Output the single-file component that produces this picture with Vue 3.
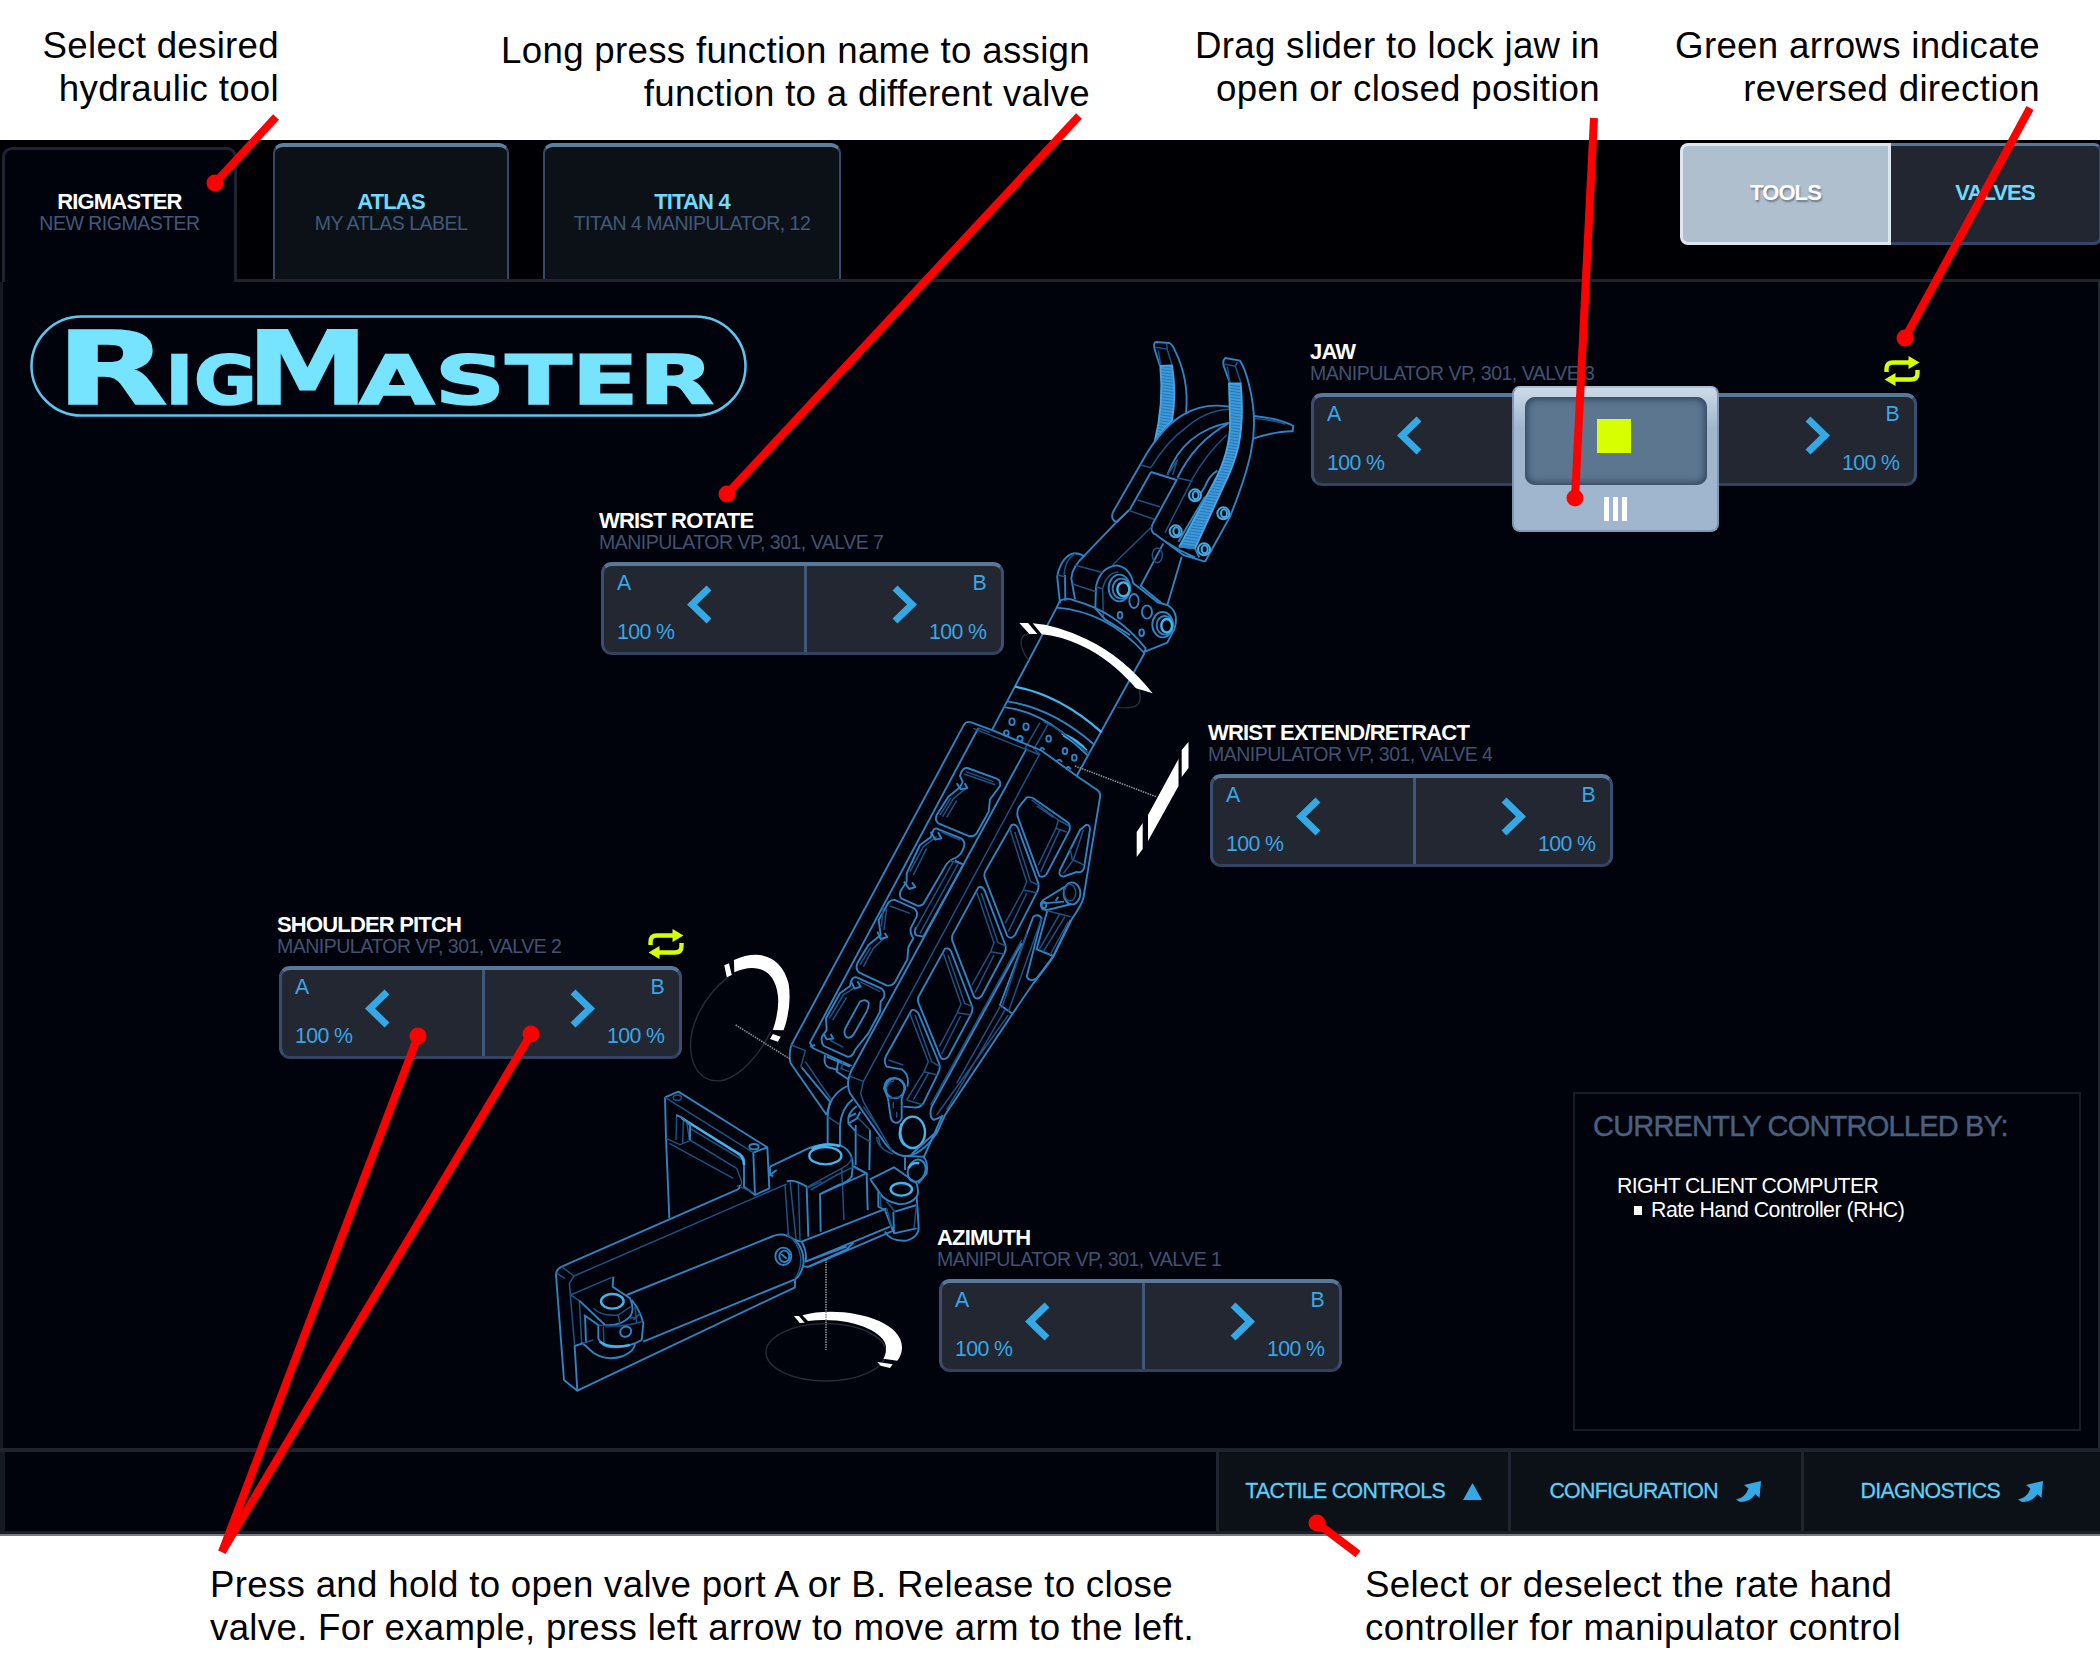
<script setup>
const tabs = [
  { name: 'RIGMASTER', label: 'NEW RIGMASTER', cls: 'tab-rig' },
  { name: 'ATLAS', label: 'MY ATLAS LABEL', cls: 'tab-atlas' },
  { name: 'TITAN 4', label: 'TITAN 4 MANIPULATOR, 12', cls: 'tab-titan' },
]

const functions = [
  { name: 'JAW', valve: 3, x: 1310, y: 58, reversed: true, lock: true },
  { name: 'WRIST ROTATE', valve: 7, x: 599, y: 227, reversed: false },
  { name: 'WRIST EXTEND/RETRACT', valve: 4, x: 1208, y: 439, reversed: false },
  { name: 'SHOULDER PITCH', valve: 2, x: 277, y: 631, reversed: true },
  { name: 'AZIMUTH', valve: 1, x: 937, y: 944, reversed: false },
]

const callouts = [
  [276, 117, 215, 183],
  [1079, 116, 727, 494],
  [1594, 118, 1575, 498],
  [2030, 108, 1905, 338],
  [222, 1552, 418, 1036],
  [222, 1552, 531, 1034],
  [1358, 1554, 1317, 1523],
]

const bolts = [[435, 526], [520, 580], [377, 634], [462, 688]]
</script>

<template>
  <div class="page">
    <div class="notes notes-top">
      <p class="note n1">Select desired<br />hydraulic tool</p>
      <p class="note n2">Long press function name to assign<br />function to a different valve</p>
      <p class="note n3">Drag slider to lock jaw in<br />open or closed position</p>
      <p class="note n4">Green arrows indicate<br />reversed direction</p>
    </div>

    <div class="app">
      <header class="head">
        <div v-for="t in tabs" :key="t.name" class="tab" :class="t.cls">
          <b>{{ t.name }}</b>
          <span>{{ t.label }}</span>
        </div>
        <div class="toggle">
          <div class="tg tg-on">TOOLS</div>
          <div class="tg">VALVES</div>
        </div>
      </header>

      <main class="stage">
        <svg class="logo" width="720" height="130" viewBox="28 302 720 130">
          <rect x="31.5" y="316.500" width="714" height="99" rx="50" fill="none" stroke="#5cc6f2" stroke-width="2.500" />
          <g class="wordmark">
            <text x="56" y="404" font-size="101" textLength="112" lengthAdjust="spacingAndGlyphs">R</text>
            <text x="165" y="404" font-size="67" textLength="92" lengthAdjust="spacingAndGlyphs">IG</text>
            <text x="247" y="404" font-size="101" textLength="121" lengthAdjust="spacingAndGlyphs">M</text>
            <text x="359" y="404" font-size="67" textLength="355" lengthAdjust="spacingAndGlyphs">ASTER</text>
          </g>
        </svg>

        <svg class="arm" width="2100" height="1166" viewBox="0 282 2100 1166">
          <defs>
            <pattern id="ribs" width="9" height="9" patternUnits="userSpaceOnUse" patternTransform="rotate(8)">
              <rect width="9" height="9" fill="#3b98da" />
              <rect width="9" height="2.500" fill="#2470ac" />
            </pattern>
          </defs>

          <!-- gripper -->
          <g class="ln" transform="translate(1050 320) scale(.33333)">
            <path d="M330 138L315 92Q308 68 318 66L358 69Q368 74 376 94Q418 180 408 278" />
            <path class="dim" d="M316 82L350 87M325 92L332 136M350 72L352 90L366 134" />
            <path class="rib" d="M331 138L366 136Q380 220 366 302Q338 328 314 366Q342 250 331 138Z" />
            <path d="M188 578L272 432Q330 325 400 284Q460 248 537 260M188 578Q182 602 200 606L235 572" />
            <path class="dim" d="M303 442Q350 365 405 325Q470 270 537 268M272 435L303 443" />
            <path d="M303 456L380 480L308 612M303 456L240 568L198 608M352 465Q400 335 537 308M382 474Q435 365 535 310" />
            <path class="dim" d="M262 540L330 560M238 572L312 598M368 465L382 420L352 465M382 474L428 484M425 480Q470 400 530 345M425 482L345 638" />
            <path d="M612 288Q690 296 730 318L728 334Q680 333 612 355" />
            <path class="dim" d="M612 295Q680 302 704 312L655 296" />
            <path d="M540 190L522 140Q516 122 526 114L570 122Q585 145 596 190Q625 300 602 400Q588 470 540 590L465 725" />
            <path class="dim" d="M522 132L556 139L562 126M532 140L540 190M556 139L573 190" />
            <path class="rib" d="M537 190L572 190Q582 300 565 380Q550 440 520 500L435 685L388 680L490 490Q545 390 540 290Z" />
            <path d="M308 612Q298 636 318 644L400 705L465 725M345 664L388 690L435 712M388 680L435 685L448 712M465 500Q475 470 502 452M465 500L445 530" />
            <path d="M465 530L385 665" />
            <g v-for="b in bolts" :key="b[0]">
              <circle class="bolt" :cx="b[0]" :cy="b[1]" r="18" />
              <ellipse class="bolt" :cx="b[0] + 2" :cy="b[1]" rx="9" ry="12" />
            </g>
            <path d="M198 608L100 710M340 670L272 798L335 850M395 710L352 855" />
            <path class="dim" d="M305 620L188 735" />
            <ellipse class="dim" cx="322" cy="706" rx="15" ry="22" />
            <path d="M102 708Q62 684 35 730Q20 760 22 775L30 850M105 706Q66 740 64 775L75 838M45 765L46 842M136 865L138 800Q150 742 200 736Q240 742 250 790L325 848L352 855Q388 875 374 925L352 968L285 995" />
            <path class="dim" d="M75 700Q45 720 42 765M76 736L160 758M68 792L138 815M22 765L45 770M136 800L158 806Q168 760 205 755M158 806L160 890" />
            <path d="M136 865L165 898L240 945" />
            <ellipse cx="208" cy="804" rx="32" ry="40" />
            <ellipse cx="214" cy="806" rx="26" ry="30" />
            <ellipse class="bright" cx="220" cy="808" rx="18" ry="21" />
            <ellipse cx="338" cy="914" rx="31" ry="38" />
            <ellipse cx="344" cy="916" rx="24" ry="28" />
            <ellipse class="bright" cx="350" cy="917" rx="16" ry="20" />
            <ellipse cx="252" cy="843" rx="14" ry="21" />
            <ellipse cx="291" cy="876" rx="15" ry="20" />
            <ellipse cx="210" cy="886" rx="7" ry="10" />
            <ellipse cx="275" cy="938" rx="7" ry="10" />
          </g>

          <!-- wrist cylinder -->
          <g class="ln" transform="translate(900 540) scale(.33333)">
            <path d="M480 182Q500 172 522 181Q650 215 737 325L732 342L530 708M480 182L470 203L275 572M470 203Q620 215 732 338" />
            <path class="bright" d="M345 440Q480 465 605 577" />
            <path d="M322 484Q460 505 584 615M315 502Q400 512 485 575L562 645" />
            <path class="bright" d="M485 580Q535 600 560 632M490 586L556 628" />
            <path class="dim" d="M420 548L375 625M445 552L400 630M430 545L465 562L568 640" />
            <g>
              <ellipse cx="336" cy="545" rx="8" ry="10" />
              <ellipse cx="378" cy="560" rx="8" ry="10" />
              <ellipse cx="319" cy="579" rx="7" ry="8" />
              <ellipse cx="360" cy="596" rx="8" ry="8" />
              <ellipse cx="446" cy="596" rx="7" ry="9" />
              <ellipse cx="495" cy="633" rx="7" ry="9" />
              <ellipse cx="523" cy="653" rx="7" ry="9" />
              <path d="M420 632Q425 615 433 630M470 665Q477 652 486 666M498 686Q505 675 512 688" />
            </g>
          </g>

          <!-- forearm housing -->
          <g class="ln" transform="translate(760 700) scale(.33333)">
            <path d="M94 1035L612 74Q620 62 634 67L700 92L845 152L950 228L1012 270Q1022 276 1020 292L970 595Q965 615 935 658L880 770Q860 800 820 850L755 945L555 1245L530 1300Q480 1372 430 1368Q400 1362 375 1330L270 1180Q256 1150 275 1110L800 145" />
            <path d="M655 84L150 1028L158 1044L275 1098M94 1035Q85 1065 92 1090L200 1245M125 1102L210 1205L200 1245M150 1040L165 1035" />
            <path class="dim" d="M94 1035L136 1052L122 1102M136 1085L215 1200M655 84L690 98M640 85L840 165M840 160L310 1145L302 1180L310 1205L395 1352M268 1128L312 1145M825 150L840 165" />
            <!-- left face openings -->
            <path d="M622 204L710 236Q724 242 720 258L690 298L686 335L650 400Q640 412 625 408L535 370Q524 362 530 345L565 290L600 262L608 245L600 228Q606 202 622 204Z" />
            <path class="dim" d="M618 215L700 245M612 222L706 254M548 350L580 296L618 265M540 345L572 294M560 352L590 302" />
            <path d="M590 250l12 18l20 -4l-8 -14" />
            <path d="M530 386L605 416Q616 424 612 440Q605 462 590 472Q565 480 555 500L490 612Q482 620 470 616L425 596Q416 588 422 572L440 545L440 520L480 435L512 412Q520 382 530 386Z" />
            <path class="dim" d="M545 396L600 420M450 515L490 440L530 410M460 525L500 445M580 485L468 685M595 490L480 700M570 482L610 492" />
            <path d="M512 395l14 24l18 -4l-10 -18M432 545l16 22l18 -6l-10 -14" />
            <path d="M585 482L610 494L490 710L470 706Q460 700 468 682" />
            <path d="M405 600L462 625Q474 634 470 650L452 685Q450 700 460 715L445 742L442 778L405 846Q395 860 380 856L298 818Q285 808 292 790L325 735L362 705L356 660L385 608Q394 598 405 600Z" />
            <path class="dim" d="M390 618L450 640M380 625L372 690M370 620L364 680M310 800L340 745L375 712M300 795L332 742" />
            <path d="M352 695l10 22l20 -6l-8 -12" />
            <path d="M290 832L365 866Q376 874 372 892L362 905L360 935L325 1000L285 1050Q278 1072 262 1070L192 1038Q182 1028 186 1010L200 990L198 955L240 880L270 858Q274 828 290 832Z" />
            <path class="dim" d="M208 955L250 885L285 862M218 960L260 892M300 845L360 875M210 1020L250 1042" />
            <path d="M272 842l12 24l18 -6l-10 -16M190 1000l10 18l20 -2l-8 -14" />
            <path d="M300 905Q318 895 326 908Q328 920 318 938L280 1005Q268 1018 258 1010Q250 1000 256 985Z" />
            <!-- right face openings -->
            <path d="M800 292Q812 290 822 296L925 368Q932 378 928 392L860 522Q850 535 838 528L773 350Q770 335 776 322Z" />
            <path class="dim" d="M815 300L895 360L888 385L835 495M830 318L880 352M895 360L928 378M888 385L920 396M900 388L842 515" />
            <path d="M755 375Q768 370 774 385L835 550Q838 565 830 578L765 705Q752 720 742 708L675 535Q670 522 678 510Z" />
            <path class="dim" d="M750 388L800 545L790 570L735 670M764 395L812 545L835 555M790 570L830 578M800 580L745 695" />
            <path d="M655 562Q668 558 674 572L736 735Q740 748 732 762L665 888Q652 902 642 890L578 725Q573 712 580 700Z" />
            <path class="dim" d="M650 575L702 728L692 755L636 855M664 580L714 728L738 738M692 755L732 762M702 765L645 878" />
            <path d="M555 746Q568 742 574 756L636 918Q640 930 632 945L565 1070Q552 1084 542 1072L476 910Q470 896 480 882Z" />
            <path class="dim" d="M550 760L603 912L592 938L538 1040M564 765L614 910L638 920M592 938L632 945M602 948L545 1062" />
            <path d="M455 930Q468 928 476 942L538 1092Q542 1106 534 1120L490 1210Q478 1225 462 1222L430 1220M455 930L378 1068Q370 1085 380 1100L425 1108Q450 1125 442 1160" />
            <path class="dim" d="M450 942L505 1085L492 1115L440 1200M465 945L515 1085L540 1100M492 1115L532 1125M505 1120L460 1200M440 1200L490 1215M385 1080L430 1095" />
            <path d="M978 375Q990 372 990 388L972 505Q965 520 950 516L910 530Q894 528 900 510L960 390Z" />
            <path class="dim" d="M970 390L940 480L910 520M940 480L972 495M930 445L938 484" />
            <ellipse cx="936" cy="580" rx="25" ry="33" />
            <ellipse class="dim" cx="930" cy="578" rx="17" ry="25" />
            <path d="M915 560L850 600Q836 612 848 628L862 630L935 612M912 605L850 610M895 590l-8 12" />
            <ellipse cx="852" cy="615" rx="7" ry="9" />
            <path d="M820 650Q835 640 845 655L800 830Q810 848 830 835L880 768M820 650L720 915L755 940M862 632L830 748L880 768L932 660" />
            <path class="dim" d="M785 720L512 1215M800 700L725 925M720 920L590 1150M735 930L560 1230M745 945L530 1245M845 655L745 935M900 640L838 748M915 650L850 755M925 665L870 765M862 632L932 650" />
            <path d="M785 730L515 1220Q505 1250 522 1260L545 1250" />
            <path d="M372 1165Q375 1135 402 1134Q432 1136 436 1165L425 1195L425 1255Q418 1270 405 1268Q395 1265 392 1252L384 1195Z" />
            <ellipse cx="405" cy="1165" rx="28" ry="30" />
            <path class="dim" d="M380 1165Q385 1145 402 1142M384 1195L425 1190M400 1205v20M410 1235v18" />
            <ellipse class="bright" cx="458" cy="1297" rx="37" ry="47" />
            <path class="bright" d="M425 1270Q410 1315 435 1336" />
            <!-- shoulder tubes -->
            <path d="M262 1158Q205 1185 203 1250L203 1332M278 1198Q245 1225 240 1275L240 1335M195 1065Q190 1095 205 1102L235 1110M200 1070L270 1100M235 1080L230 1115L265 1138M287 1275L287 1395M330 1290L328 1410" />
            <path class="dim" d="M203 1250L240 1275M248 1085L245 1105M240 1105L268 1115M287 1300L330 1325M290 1250L330 1290M310 1220L360 1290M350 1310Q350 1345 400 1362M355 1310L362 1340" />
            <path d="M290 1218Q260 1240 265 1270L285 1292M268 1250l20 -10M266 1270l25 -15l10 -20" />
            <path d="M548 1245L490 1375M535 1290L455 1362M435 1370V1410M430 1368L490 1370Q505 1385 500 1420L475 1450" />
            <ellipse cx="470" cy="1412" rx="26" ry="34" transform="rotate(20 470 1412)" />
            <path class="bright" d="M446 1405Q455 1385 478 1390" />
          </g>

          <!-- base -->
          <g class="ln" transform="translate(540 1060) scale(.33333)">
            <path d="M375 112L415 95L682 262L688 385L645 405L612 380L612 300Q612 290 600 282L430 178M375 112L378 235L388 475M645 405L640 278L682 262" />
            <path class="dim" d="M375 112L640 278M378 235L420 254L450 242M388 250L580 355M410 165L408 240M430 178L428 252M440 182L448 240M450 205L605 298M450 240L590 325L605 365Q605 380 590 378" />
            <path class="bright" d="M425 174L590 278Q612 290 612 315" />
            <path d="M408 165L425 172L450 195L450 240" />
            <ellipse class="dim" cx="412" cy="113" rx="12" ry="8" />
            <ellipse cx="642" cy="260" rx="14" ry="8" />
            <path d="M600 375Q600 388 585 392L65 620Q48 628 48 645L72 960L112 992L765 682L765 658M112 992L104 858" />
            <path class="dim" d="M65 620L102 648L740 372M102 648L88 670L92 705L215 652M88 670L104 858M50 640L75 655M92 705L118 722L125 850M735 372L745 525M750 362L768 538M775 370L780 540M600 380L645 400" />
            <path d="M690 320L805 265Q860 245 905 258Q940 275 938 320L935 350Q920 370 895 375L840 402L842 515M690 320L690 345L710 330M690 345L700 348M740 365Q760 355 800 380L805 530" />
            <path class="dim" d="M800 382L905 325Q935 310 935 290M845 365L800 385M905 325L912 480M938 320L985 345M812 390L890 345L938 322" />
            <path d="M940 318L980 340L983 450M975 342L842 402" />
            <ellipse class="bright" cx="856" cy="287" rx="48" ry="26" />
            <path class="bright" d="M815 268Q850 245 900 258" />
            <path d="M260 705L700 528Q730 515 765 540Q795 570 790 615Q780 650 765 658L310 845M765 540L785 545L1040 445M790 620L808 620L1060 512M785 545Q802 575 797 605L920 560M797 605L1050 500M940 548L920 568L800 622" />
            <path class="dim" d="M740 522Q775 545 782 590Q785 630 765 655" />
            <ellipse cx="730" cy="589" rx="24" ry="26" />
            <ellipse cx="733" cy="589" rx="15" ry="17" />
            <path d="M724 582L740 596" />
            <path d="M990 358L1062 322L1130 370Q1138 400 1130 410Q1110 435 1075 432Q1035 425 1020 400L992 360M1130 410L1136 500Q1138 530 1100 542Q1050 545 1035 515M1015 395L1015 440L1035 450L1060 515M1065 455L1130 435M1060 455L1062 520L1130 505" />
            <path class="dim" d="M1020 400L1022 440M1040 425L1065 455M1130 430L1122 505M1040 445L1055 500" />
            <ellipse class="bright" cx="1084" cy="388" rx="32" ry="19" />
            <path d="M220 650L218 680L270 715Q285 750 270 770Q240 800 195 795L118 722M132 765L175 795L175 835Q185 860 215 862Q270 862 305 840L310 790Q300 750 275 720M104 858L128 850L160 878Q200 905 250 888Q285 872 285 850M135 765L138 848" />
            <path class="dim" d="M160 745Q185 770 235 765L272 740M175 795Q235 805 305 785M190 800L192 855M235 765L240 795M128 850L160 840M285 740L290 790M280 780L300 760M270 775L295 770" />
            <path class="bright" d="M180 845Q210 868 270 855" />
            <ellipse class="bright" cx="217" cy="724" rx="34" ry="22" />
            <ellipse cx="257" cy="815" rx="17" ry="15" transform="rotate(-25 257 815)" />
          </g>

          <!-- motion indicators -->
          <g transform="translate(900 540) scale(.33333)">
            <path class="gr" d="M388 282Q355 285 366 322Q372 345 386 360M716 448Q730 490 702 500Q685 506 652 502" />
            <path class="wh" d="M398 250Q470 255 560 298Q670 350 758 460L708 445Q630 355 540 315Q480 288 425 283Z" />
            <path class="wh" d="M358 249L384 249L412 282L388 282Z" />
          </g>
          <path class="wh" d="M1178.500 759V786L1148 841V815ZM1181.700 750L1188.500 742V768L1181.700 777ZM1136.700 832L1142.700 823V849L1136.700 857Z" />
          <path class="dots" d="M1075 766L1157 797" />
          <g transform="translate(540 1060) scale(.33333)">
            <ellipse class="gr" cx="858" cy="877" rx="180" ry="86" />
            <path class="wh" d="M787 766C900 735 1086 775 1086 862Q1086 885 1072 902L1030 896Q1040 880 1038 860C1035 815 930 768 804 783Z" />
            <path class="wh" d="M762 768L777 768L794 788L779 789ZM1012 906L1058 913L1050 924L1022 917Z" />
            <path class="dots" d="M858 597V870" />
          </g>
          <g transform="translate(260 880) scale(.35714 .33333)">
            <path class="gr" d="M1312 290C1240 350 1200 440 1206 510C1212 580 1250 612 1300 600C1350 585 1400 520 1430 455" />
            <path class="wh" d="M1327 240C1400 205 1460 230 1480 310Q1490 380 1466 451L1436 450Q1455 390 1450 345C1440 260 1380 250 1328 277ZM1300 256L1313 250L1321 285L1307 292ZM1436 462L1458 470L1450 485L1428 477Z" />
            <path class="dots" d="M1332 435L1484 537" />
          </g>
        </svg>

        <section
          v-for="f in functions"
          :key="f.name"
          class="fn"
          :class="{ wide: f.lock }"
          :style="{ left: f.x + 'px', top: f.y + 'px' }"
        >
          <h3>{{ f.name }}</h3>
          <p>MANIPULATOR VP, 301, VALVE {{ f.valve }}</p>
          <div class="ports">
            <div class="port">
              <div class="lbl"><span>A</span><span>100 %</span></div>
              <svg class="chev" width="25" height="39" viewBox="0 0 25 39"><path d="M22 3L5 19.500L22 36" /></svg>
            </div>
            <div class="port port-b">
              <svg class="chev" width="25" height="39" viewBox="0 0 25 39"><path d="M3 3L20 19.500L3 36" /></svg>
              <div class="lbl"><span>B</span><span>100 %</span></div>
            </div>
          </div>
          <svg v-if="f.reversed" class="rev" width="36" height="30" viewBox="0 0 36 30">
            <path d="M2.500 16V13Q2.500 6.500 9 6.500H26M33.500 14V17Q33.500 23.500 27 23.500H10" fill="none" stroke="#d8ff00" stroke-width="4.400" />
            <path d="M24.500 0L35.500 6.500L24.500 13ZM11.500 17L.5 23.500L11.500 30Z" fill="#d8ff00" />
          </svg>
          <div v-if="f.lock" class="slider">
            <div class="well"><i></i></div>
            <div class="grip"><i></i><i></i><i></i></div>
          </div>
        </section>

        <aside class="control">
          <h2>CURRENTLY CONTROLLED BY:</h2>
          <div class="who">RIGHT CLIENT COMPUTER</div>
          <div class="dev"><i></i>Rate Hand Controller (RHC)</div>
        </aside>
      </main>

      <footer class="foot">
        <div class="blank"></div>
        <div class="cell c1">
          TACTILE CONTROLS
          <svg width="19" height="17" viewBox="0 0 19 17"><path d="M9.500 0L19 17H0Z" /></svg>
        </div>
        <div class="cell c2">
          CONFIGURATION
          <svg width="25" height="21" viewBox="0 0 25 21"><path d="M8 4L25 0L23.500 17L19.500 13Q14 21 4 21L0 18.500Q9 17 12.500 7.500Z" /></svg>
        </div>
        <div class="cell c3">
          DIAGNOSTICS
          <svg width="25" height="21" viewBox="0 0 25 21"><path d="M8 4L25 0L23.500 17L19.500 13Q14 21 4 21L0 18.500Q9 17 12.500 7.500Z" /></svg>
        </div>
      </footer>
    </div>

    <div class="notes notes-bottom">
      <p class="note b1">Press and hold to open valve port A or B. Release to close<br />valve. For example, press left arrow to move arm to the left.</p>
      <p class="note b2">Select or deselect the rate hand<br />controller for manipulator control</p>
    </div>

    <svg class="callouts" width="2100" height="1669" viewBox="0 0 2100 1669">
      <g v-for="(c, i) in callouts" :key="i">
        <line :x1="c[0]" :y1="c[1]" :x2="c[2]" :y2="c[3]" />
        <circle :cx="c[2]" :cy="c[3]" r="8.500" />
      </g>
    </svg>
  </div>
</template>

<style>
body {
  margin: 0;
  background: #fff;
}
</style>

<style scoped>
.page {
  position: relative;
  width: 2100px;
  height: 1669px;
  overflow: hidden;
  background: #fff;
  font-family: "Liberation Sans", Arial, sans-serif;
}
p, h2, h3 { margin: 0; font-weight: 400; }
.notes { display: flex; box-sizing: border-box; }
.notes-top { height: 140px; padding-top: 24px; }
.notes-bottom { padding-top: 27px; }
.note { font-size: 36.67px; line-height: 43px; letter-spacing: 0.3px; color: #000; white-space: nowrap; text-align: right; }
.n1 { width: 279px; }
.n2 { width: 811px; padding-top: 5px; }
.n3 { width: 510px; }
.n4 { width: 440px; }
.b1 { margin-left: 210px; width: 1155px; text-align: left; }
.b2 { text-align: left; }

.app { height: 1394px; background: #00030b; border-bottom: 2px solid #777a80; }
.head {
  display: flex;
  align-items: flex-end;
  height: 142px;
  box-sizing: border-box;
  background: linear-gradient(#1f2430, #1f2430) 236px 139px / 1864px 3px no-repeat, #000004;
}
.tab {
  display: flex;
  flex-direction: column;
  align-items: center;
  box-sizing: border-box;
  height: 136px;
  margin-bottom: 3px;
  padding-top: 43px;
  background: #0c1117;
  border: 3px solid #34496a;
  border-width: 4px 2px 0;
  border-top-color: #5f7f9f;
  border-radius: 10px 10px 0 0;
  letter-spacing: -0.5px;
  white-space: nowrap;
}
.tab b { font-size: 22px; line-height: 24px; letter-spacing: -0.85px; color: #6fdcff; }
.tab span { font-size: 19.5px; line-height: 20px; margin-top: -1px; color: #42597a; }
.tab-rig {
  width: 235px;
  margin-left: 2px;
  height: 135px;
  margin-bottom: 0;
  padding-top: 40px;
  background: #00030b;
  border: 3px solid #1f2430;
  border-bottom: 0;
}
.tab-rig b { color: #fff; }
.tab-atlas { width: 236px; margin-left: 36px; }
.tab-titan { width: 298px; margin-left: 34px; }
.toggle { display: flex; align-self: flex-start; margin: 3px -2px 0 auto; }
.tg {
  box-sizing: border-box;
  width: 211px;
  height: 102px;
  line-height: 94px;
  text-align: center;
  font-weight: 700;
  font-size: 22px;
  letter-spacing: -0.9px;
  color: #6fdcff;
  background: #222630;
  border: 3px solid #34466a;
  border-left: 0;
  border-top-color: #5a7797;
  border-radius: 0 8px 8px 0;
}
.tg-on {
  color: #fff;
  text-shadow: 1px 2px 2px #6d7b8c;
  background: #b0bfce;
  border: 3px solid #dde6ee;
  border-radius: 8px 0 0 8px;
}

.stage {
  position: relative;
  display: flex;
  justify-content: space-between;
  height: 1166px;
  box-sizing: border-box;
  border-left: 3px solid #151922;
  border-right: 2px solid #262a33;
}
.logo { margin: 20px 0 0 25px; overflow: visible; }
.wordmark { font-family: "DejaVu Sans", sans-serif; font-weight: 700; fill: #76e4ff; stroke: #76e4ff; stroke-width: 1.5px; }
.arm { position: absolute; left: -3px; top: 0; }
.arm path, .arm ellipse, .arm circle { vector-effect: non-scaling-stroke; }
.ln { fill: none; stroke: #2f83c2; stroke-width: 1.9px; stroke-linejoin: round; }
.ln .dim { stroke: #1d5282; stroke-width: 1.5px; }
.ln .bright { stroke: #45b4ec; stroke-width: 2.4px; }
.ln .rib { fill: url(#ribs); stroke: #45a6e2; }
.ln .bolt { fill: #03101c; stroke: #46a9e4; stroke-width: 2px; }
.wh { fill: #fff; }
.gr { fill: none; stroke: #2a2c36; stroke-width: 1.4px; }
.dots { fill: none; stroke: #8c8f96; stroke-width: 1.6px; stroke-dasharray: 1.5 1; }

.fn { position: absolute; width: 407px; margin-left: -3px; }
.fn h3 { font-size: 22px; line-height: 24px; font-weight: 700; letter-spacing: -0.82px; color: #fff; white-space: nowrap; }
.fn p { font-size: 19.5px; line-height: 20px; margin-top: -1px; letter-spacing: -0.5px; color: #42526f; white-space: nowrap; }
.ports {
  display: flex;
  box-sizing: border-box;
  width: 403px;
  height: 93px;
  margin: 10px 0 0 2px;
  background: #222732;
  border: 3px solid #3a4f70;
  border-top: 4px solid #597897;
  border-bottom-color: #33435f;
  border-radius: 11px;
}
.wide .ports { width: 606px; margin-left: 1px; }
.port { display: flex; align-items: center; box-sizing: border-box; width: 200px; padding: 7px 0 9px 13px; gap: 13px; }
.port-b { flex: 1; justify-content: flex-end; padding: 7px 15px 9px 0; border-left: 3px solid #3f587a; gap: 12px; }
.wide .port-b { border-left-color: transparent; }
.lbl { display: flex; flex-direction: column; justify-content: space-between; align-self: stretch; width: 57px; font-size: 21.3px; line-height: 21px; letter-spacing: -0.6px; color: #3aa6e6; white-space: nowrap; }
.port-b .lbl { text-align: right; }
.chev { margin-bottom: 7px; }
.chev path { fill: none; stroke: #35a9e6; stroke-width: 7; }
.rev { position: absolute; left: 371px; top: 16px; }
.wide .rev { left: 574px; }
.slider {
  position: absolute;
  left: 202px;
  top: 46px;
  display: flex;
  flex-direction: column;
  align-items: center;
  width: 207px;
  height: 146px;
  box-sizing: border-box;
  padding-top: 9px;
  border-radius: 8px;
  background: linear-gradient(#cbdbe8, #a0b6cf 40px);
  border: 2px solid #8296b3;
  border-top-color: #adc1d4;
}
.well {
  display: flex;
  align-items: center;
  justify-content: center;
  width: 182px;
  height: 88px;
  box-sizing: border-box;
  border-radius: 10px;
  background: #5c7690;
  box-shadow: inset 0 0 7px 2px #2f4059;
}
.well i { width: 34px; height: 34px; margin: 0 0 10px -4px; background: #d8ff00; }
.grip { display: flex; gap: 4px; margin-top: 12px; }
.grip i { width: 5px; height: 24px; background: #fff; }

.control {
  box-sizing: border-box;
  width: 508px;
  height: 339px;
  margin: 810px 17px 0 0;
  padding: 15px 0 0 18px;
  border: 2px solid #171c26;
}
.control h2 { font-size: 29px; line-height: 34px; letter-spacing: -0.8px; color: #4a607f; -webkit-text-stroke: 0.4px #4a607f; white-space: nowrap; }
.who { margin: 31px 0 0 24px; font-size: 21.3px; line-height: 24px; letter-spacing: -0.65px; color: #fff; }
.dev { display: flex; align-items: center; margin-left: 41px; font-size: 21.3px; line-height: 24px; letter-spacing: -0.5px; color: #fff; }
.dev i { width: 8px; height: 9px; margin-right: 9px; background: #fff; }

.foot {
  display: flex;
  height: 86px;
  box-sizing: border-box;
  border-top: 4px solid #1f232d;
  border-bottom: 3px solid #1a1e27;
}
.blank { width: 1216px; box-sizing: border-box; border-left: 5px solid #151922; }
.cell {
  display: flex;
  align-items: center;
  justify-content: flex-end;
  box-sizing: border-box;
  padding-bottom: 1px;
  background: #0c1117;
  border-left: 3px solid #1f242e;
  font-size: 21.3px;
  letter-spacing: -0.65px;
  color: #5fd0fa;
  -webkit-text-stroke: 0.3px #5fd0fa;
  white-space: nowrap;
}
.cell svg { margin-left: 18px; fill: #35a9e6; }
.c1 { width: 292px; padding-right: 26px; }
.c2 { width: 293px; padding-right: 40px; }
.c3 { width: 299px; padding-right: 57px; }

.callouts { position: absolute; left: 0; top: 0; }
.callouts line { stroke: #f00; stroke-width: 8; }
.callouts circle { fill: #f00; }
</style>
